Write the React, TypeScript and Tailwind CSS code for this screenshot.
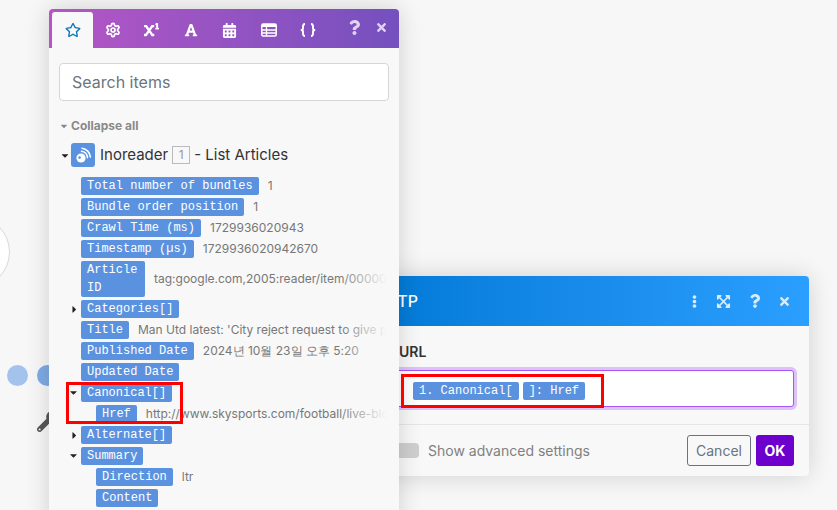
import React from "react"
import { FaCaretDown, FaCaretRight, FaRegStar, FaSuperscript, FaFont, FaCalendarAlt, FaQuestion, FaTimes, FaEllipsisV, FaExpandArrowsAlt, FaWrench } from "react-icons/fa"
import { LuSettings } from "react-icons/lu"

type Row = {
	label: React.ReactNode
	value?: string
	caret?: "down" | "right"
	nested?: boolean
	tall?: boolean
}

const rows: Row[] = [
	{ label: "Total number of bundles", value: "1" },
	{ label: "Bundle order position", value: "1" },
	{ label: "Crawl Time (ms)", value: "1729936020943" },
	{ label: "Timestamp (µs)", value: "1729936020942670" },
	{ label: "Article ID", value: "tag:google.com,2005:reader/item/00000", tall: true },
	{ label: "Categories[]", caret: "right" },
	{ label: "Title", value: "Man Utd latest: 'City reject request to give p" },
	{ label: "Published Date", value: "2024년 10월 23일 오후 5:20" },
	{ label: "Updated Date" },
	{ label: "Canonical[]", caret: "down" },
	{ label: "Href", value: "http://www.skysports.com/football/live-blo", nested: true },
	{ label: "Alternate[]", caret: "right" },
	{ label: "Summary", caret: "down" },
	{ label: "Direction", value: "ltr", nested: true },
	{ label: "Content", nested: true },
]

function Pill({ children, className = "" }: { children: React.ReactNode; className?: string }) {
	return (
		<span className={`inline-block shrink-0 rounded-[2px] bg-[#5b92e0] px-[6px] font-['Liberation_Mono',monospace] text-[12px] leading-[18px] text-white ${className}`}>
			{children}
		</span>
	)
}

function ItemRow({ row }: { row: Row }) {
	return (
		<div className={`relative flex items-center ${row.nested ? "pl-[47px]" : "pl-[32px]"}`}>
			{row.caret === "down" && <FaCaretDown className="absolute left-[19px] top-[3px] text-[11px] text-[#222]" />}
			{row.caret === "right" && <FaCaretRight className="absolute left-[20px] top-[4px] text-[11px] text-[#222]" />}
			<Pill className={row.tall ? "w-[64px]" : ""}>{row.label}</Pill>
			{row.value && <span className="ml-[9px] whitespace-nowrap text-[12px] leading-[18px] text-[#777]">{row.value}</span>}
		</div>
	)
}

function RssIcon() {
	return (
		<svg viewBox="0 0 24 24" className="h-[24px] w-[24px]" fill="none">
			<circle cx="10" cy="15" r="4.6" fill="white" />
			<circle cx="8.6" cy="14.6" r="1.3" fill="#5b92e0" />
			<path d="M10.5 8.2a6.8 6.8 0 0 1 6 6.4" stroke="white" strokeWidth="1.6" strokeLinecap="round" />
			<path d="M11 5.2a9.8 9.8 0 0 1 8.4 8.8" stroke="white" strokeWidth="1.6" strokeLinecap="round" />
		</svg>
	)
}

function TableIcon() {
	return (
		<svg viewBox="0 0 16 14" className="h-[14px] w-[16px]" fill="none" stroke="white">
			<rect x="0.75" y="1" width="14.5" height="12" rx="1.5" strokeWidth="1.5" />
			<path d="M1 2.5h14" strokeWidth="3" />
			<path d="M1 7h14M1 10h14M5.5 3v10" strokeWidth="1.3" />
		</svg>
	)
}

function BracesIcon() {
	return (
		<svg viewBox="0 0 18 14" className="h-[14px] w-[18px]" fill="none" stroke="white" strokeWidth="1.9">
			<path d="M6 1C4.2 1 4 2 4 3.5V5.5C4 6.4 3 7 1.8 7C3 7 4 7.6 4 8.5V10.5C4 12 4.2 13 6 13" />
			<path d="M12 1C13.8 1 14 2 14 3.5V5.5C14 6.4 15 7 16.2 7C15 7 14 7.6 14 8.5V10.5C14 12 13.8 13 12 13" />
		</svg>
	)
}

function ItemsPanel() {
	const tabClass = "flex w-[39px] justify-center text-white"
	return (
		<div className="absolute left-[49px] top-[9px] h-[520px] w-[350px] overflow-hidden rounded-t-[4px] bg-[#f8f8f8] shadow-[0_0_24px_rgba(0,0,0,0.16)]">
			<div className="flex h-[39px] items-end bg-gradient-to-r from-[#b655c6] to-[#7450be] pl-[3px]">
				<div className="flex h-[36px] w-[41px] items-center justify-center rounded-t-[3px] bg-[#f8f8f8] text-[#0a75b8]">
					<FaRegStar className="text-[16px]" />
				</div>
				<div className="flex h-[36px] items-center">
					<div className={tabClass}><LuSettings className="text-[16px]" strokeWidth={2.6} /></div>
					<div className={tabClass}><FaSuperscript className="text-[15px]" /></div>
					<div className={tabClass}><FaFont className="text-[14px]" /></div>
					<div className={tabClass}><FaCalendarAlt className="text-[15px]" /></div>
					<div className={tabClass}><TableIcon /></div>
					<div className={tabClass}><BracesIcon /></div>
				</div>
				<div className="ml-[20px] flex h-[36px] items-center gap-[13px] pb-[6px] text-[#e2d2f2]">
					<FaQuestion className="text-[15px]" />
					<FaTimes className="text-[13px]" />
				</div>
			</div>
			<div className="px-[10px] pt-[15px]">
				<div className="flex h-[38px] items-center rounded-[4px] border border-[#d6d6d6] bg-white px-[12px] text-[16px] text-[#6c757d]">Search items</div>
			</div>
			<div className="mt-[17px] flex h-[16px] items-center pl-[10px] text-[12px] font-bold text-[#8a8a8a]">
				<FaCaretDown className="mr-[2px] text-[10px]" />
				Collapse all
			</div>
			<div className="mt-[9px] flex h-[24px] items-center pl-[10px] text-[15px] text-[#333]">
				<FaCaretDown className="w-[12px] text-[11px] text-[#222]" />
				<div className="flex h-[24px] w-[24px] items-center justify-center rounded-[3px] bg-[#5b92e0]"><RssIcon /></div>
				<span className="ml-[5px]">Inoreader</span>
				<span className="ml-[4px] mr-[4px] flex h-[18px] w-[18px] items-center justify-center border border-[#bbb] text-[12px] text-[#999]">1</span>
				<span>- List Articles</span>
			</div>
			<div className="relative mt-[10px] flex flex-col gap-[3px]">
				{rows.map((row, i) => <ItemRow key={i} row={row} />)}
				<div className="absolute right-0 top-0 h-full w-[60px] bg-gradient-to-r from-transparent to-[#f8f8f8] to-80%" />
			</div>
		</div>
	)
}

function HttpDialog() {
	return (
		<div className="absolute left-[372px] top-[276px] w-[437px] overflow-hidden rounded-[4px] bg-[#f8f8f8] shadow-[0_0_24px_rgba(0,0,0,0.16)]">
			<div className="flex h-[50px] items-center bg-gradient-to-r from-[#0079d6] to-[#2a9fff] pl-[3px] pr-[18px] text-white">
				<span className="text-[16px] font-medium">HTTP</span>
				<div className="ml-auto flex items-center text-[#d7ecff]">
					<FaEllipsisV className="text-[13px]" />
					<FaExpandArrowsAlt className="ml-[15px] text-[15px]" />
					<FaQuestion className="ml-[17px] text-[14px]" />
					<FaTimes className="ml-[16px] text-[13px]" />
				</div>
			</div>
			<div className="pl-[27px] pr-[15px]">
				<div className="mt-[17px] text-[14px] font-semibold leading-[17px] text-[#333]">URL</div>
				<div className="-ml-[15px] mt-[10px] flex h-[37px] items-center rounded-[3px] border border-[#a855f7] bg-white pl-[28px] pt-[5px] shadow-[0_0_0_3px_#dcc2f7]">
					<Pill>1. Canonical[</Pill>
					<Pill className="ml-[4px]">]: Href</Pill>
				</div>
			</div>
			<div className="mt-[17px] flex h-[52px] items-center border-t border-[#e6e6e6] pl-[27px] pr-[15px]">
				<div className="h-[15px] w-[20px] rounded-r-[4px] bg-[#cfcfcf]" />
				<span className="ml-[9px] text-[14px] text-[#808080]">Show advanced settings</span>
				<div className="ml-auto flex items-center gap-[5px]">
					<div className="flex h-[31px] w-[64px] items-center justify-center rounded-[3px] border border-[#6b7280] text-[14px] text-[#6b7280]">Cancel</div>
					<div className="flex h-[31px] w-[38px] items-center justify-center rounded-[3px] bg-[#6d00cc] text-[14px] font-bold text-white">OK</div>
				</div>
			</div>
		</div>
	)
}

export default function App() {
	return (
		<div className="relative h-[510px] w-[837px] overflow-hidden bg-[#f7f7f7] font-['Inter',sans-serif]">
			{/* scenario canvas behind the panels */}
			<div className="absolute left-[-62px] top-[216px] h-[72px] w-[72px] rounded-full border border-[#d8d8d8] bg-white" />
			<div className="absolute left-[7px] top-[365px] h-[21px] w-[21px] rounded-full bg-[#a3c3ec]" />
			<div className="absolute left-[37px] top-[365px] h-[21px] w-[21px] rounded-full bg-[#7fabe4]" />
			<FaWrench className="absolute left-[37px] top-[411px] text-[21px] text-[#555]" />

			<HttpDialog />
			<ItemsPanel />

			{/* red annotations */}
			<div className="absolute left-[66px] top-[382px] h-[42px] w-[117px] border-[3px] border-[#f00]" />
			<div className="absolute left-[401px] top-[374px] h-[34px] w-[203px] border-[3px] border-[#f00]" />
		</div>
	)
}
